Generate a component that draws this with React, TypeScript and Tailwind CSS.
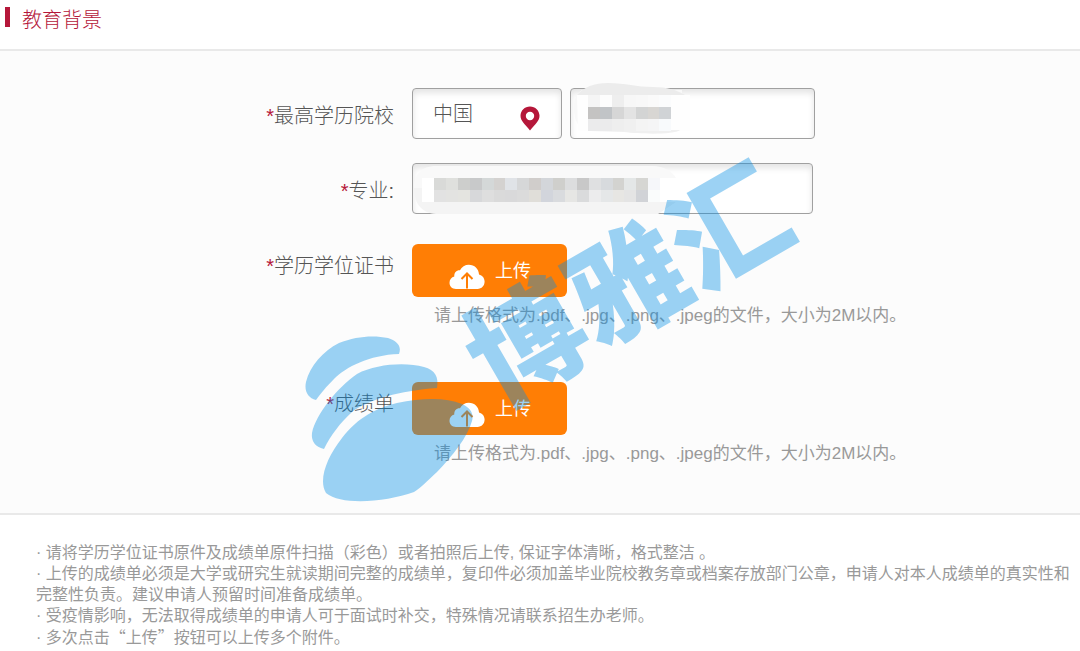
import React from "react";

const SCHOOL_CELLS = [
  ["#f5f5f5", "#fdfdfd", "#eeeeee", "#f7f7f7", "#f8f8f8", "#fafafa", "#fbfcfd"],
  ["#c4c3c2", "#c1c4c7", "#d6d6d6", "#e3e3e3", "#d3d4d4", "#d8d6d3", "#d0d3d6"],
  ["#ebebec", "#ebebec", "#eeeeee", "#f0f0f0", "#f4f4f4", "#f5f5f6", "#f8fafc"],
];

const MAJOR_CELLS = [
  ["#d9dad8", "#dfe0dd", "#cdcecc", "#c8c9ca", "#d4d8d8", "#d4d2d0", "#e0e3e7", "#d6d7d8", "#d0cdcb", "#d3d6da", "#cfcfcc", "#dcddde", "#c8c8c8", "#dfe0e1", "#d7dadd", "#d3d3d0", "#e4e7e7", "#d6d6d3", "#f6f7fa"],
  ["#e2e2e2", "#e3e3e1", "#e4e4e0", "#d7d8da", "#dedede", "#dadada", "#d9d9da", "#dbdbdb", "#e0ded9", "#d2d5dc", "#d9dbde", "#e6e6e4", "#dadbdc", "#ececed", "#e5e7e8", "#e7e6e3", "#e4e4e4", "#d1d3d7", "#fafcfc"],
];

function Cells({ rows, x, y }: { rows: string[][]; x: number; y: number }) {
  return (
    <g shapeRendering="crispEdges">
      {rows.map((row, r) =>
        row.map((fill, c) => (
          <rect key={`${r}-${c}`} x={x + c * 11.9} y={y + r * 12} width="12" height="12" fill={fill} />
        )),
      )}
    </g>
  );
}

function Label({ htmlFor, children }: { htmlFor: string; children: React.ReactNode }) {
  return (
    <label htmlFor={htmlFor} className="text-right text-xl leading-7 text-[#555]">
      <span className="text-[#b5173a]">*</span>
      {children}
    </label>
  );
}

const fieldClass =
  "h-[51px] w-full appearance-none rounded-[4px] border border-[#a0a0a0] bg-white px-5 text-xl font-light text-[#555] shadow-[inset_0_4px_6px_#e4e4e4] outline-none";

function Upload({ id }: { id: string }) {
  return (
    <div>
      <button
        id={id}
        type="button"
        className="flex h-[53px] w-[155px] items-center rounded-md bg-[#ff7e05] pl-[37px] text-lg font-normal text-white"
      >
        <svg className="mt-3 h-[26px] w-[36px]" viewBox="0 0 36 26" aria-hidden="true">
          <path
            d="M7 25C3 25 .5 22.3 .5 18.8c0-3.200 2-5.600 4.800-6.300C5 8.500 7.500 6 11 6.200 12.700 2.700 16 .7 19.800 .7c5.700 0 9.900 4 10.200 9.800 3.400.9 5.600 3.700 5.600 7.100 0 4.200-3 7.400-7 7.400Z"
            fill="#fff"
          />
          <path d="M18 24.500V10M12.500 15 18 9.500l5.500 5.500" fill="none" stroke="#ff7e05" strokeWidth="2" />
        </svg>
        <span className="ml-[10px]">上传</span>
      </button>
      <p className="mt-[7px] pl-[22px] text-[17px] leading-6 font-normal text-[#999]">
        请上传格式为.pdf、.jpg、.png、.jpeg的文件，大小为2M以内。
      </p>
    </div>
  );
}

function Watermark() {
  return (
    <div
      aria-hidden="true"
      className="pointer-events-none absolute left-[304px] top-[157px] h-[350px] w-[500px] text-[#038ee5] opacity-39"
    >
      <svg className="absolute inset-0 size-full" viewBox="304 157 500 350" fill="currentColor">
        <path d="M316 400C308 398 304 391 306 382 310 366 323 351 339 343 356 336 374 335 388 338 397 341 402 346 399 354 369 355 346 367 334 379 326 387 321 393 316 400Z" />
        <path d="M324 449C315 447 311 441 312 433 316 414 337 388 357 374 376 364 405 362 424 367 435 370 439 377 437 388 399 391 370 399 352 412 340 423 331 435 324 449Z" />
        <path d="M326 493C318 480 327 457 342 438 358 417 377 408 397 403 422 398 445 397 462 404 471 408 474 414 472 421 467 438 453 455 437 472 428 480 421 488 414 492 386 502 342 506 326 493Z" />
      </svg>
      <span className="absolute left-[325px] top-[130px] -translate-x-1/2 -translate-y-1/2 -rotate-30 whitespace-nowrap text-[116px] leading-none font-black">
        博雅汇
      </span>
    </div>
  );
}

export default function App() {
  return (
    <main className="relative min-h-screen overflow-hidden bg-white font-['Liberation_Sans','Noto_Sans_CJK_SC',sans-serif] font-light">
      <header className="flex h-[51px] items-start gap-3 border-b-2 border-[#e9e9e9] pl-[5px] pt-[6px]">
        <span className="mt-px h-5 w-[5px] bg-[#b5173a]" />
        <h1 className="text-xl leading-7 text-[#b5173a]">教育背景</h1>
      </header>

      <form
        className="grid grid-cols-[394fr_668fr] gap-x-[18px] border-b-2 border-[#e9e9e9] bg-[#fcfcfc] pt-[37px] pb-[47px]"
        onSubmit={(e) => e.preventDefault()}
      >
        <div className="pt-[14px] text-right">
          <Label htmlFor="school">最高学历院校</Label>
        </div>
        <div className="mb-6 flex max-w-[403px] gap-2">
          <div className="relative w-[150px] shrink-0">
            <select aria-label="国家" className={fieldClass}>
              <option>中国</option>
            </select>
            <svg className="pointer-events-none absolute right-[22px] top-[18px] h-[25px] w-5" viewBox="0 0 20 25" aria-hidden="true">
              <path
                fillRule="evenodd"
                fill="#b5173a"
                d="M10 .5C4.700.5.500 4.600.500 9.800.500 15 5 18.500 10 24.500 15 18.500 19.500 15 19.500 9.800 19.500 4.600 15.300.5 10 .5ZM10 5.800a4.200 4.200 0 1 1 0 8.400 4.200 4.200 0 0 1 0-8.400Z"
              />
            </svg>
          </div>
          <div className="relative grow">
            <input id="school" type="text" className={fieldClass} />
            <svg className="pointer-events-none absolute left-0 top-[-6px] h-[54px] w-[125px]" viewBox="0 0 125 54" aria-hidden="true">
              <path d="M4 30C3 20 5 13 12 8H112V48H14C7 44 5 37 4 30Z" fill="#f8f8f8" />
              <path d="M7 13C14 5 24 1 38 1c18 0 28 4 45 4 14 0 24 3 32 8Z" fill="#ececec" />
              <path d="M7 13H120V49H8Z" fill="#fefefe" />
              <path d="M20 48H104L110 48C104 53 70 52 54 50L20 49Z" fill="#f0f0f0" />
              <Cells rows={SCHOOL_CELLS} x={18} y={13} />
            </svg>
          </div>
        </div>

        <div className="pt-[14px] text-right">
          <Label htmlFor="major">专业:</Label>
        </div>
        <div className="relative mb-[30px] max-w-[401px]">
          <input id="major" type="text" className={fieldClass} />
          <svg className="pointer-events-none absolute left-0 top-0 h-[51px] w-[270px]" viewBox="0 0 270 51" aria-hidden="true">
            <path d="M2 25C2 12 9 3 24 3H240c12 0 20 5 24 12V25Z" fill="#f9f9f9" />
            <path d="M2 25H264V39L246 51H24C9 50 2 40 2 25Z" fill="#f4f4f4" />
            <path d="M10 15H266V39H10Z" fill="#fff" />
            <Cells rows={MAJOR_CELLS} x={22} y={15} />
          </svg>
        </div>

        <div className="pt-2 text-right">
          <Label htmlFor="degree">学历学位证书</Label>
        </div>
        <div className="mb-[54px]">
          <Upload id="degree" />
        </div>

        <div className="pt-2 text-right">
          <Label htmlFor="transcript">成绩单</Label>
        </div>
        <Upload id="transcript" />
      </form>

      <section className="pt-[27px] pl-9 text-base leading-[21px] font-normal text-[#999]">
        <p>· 请将学历学位证书原件及成绩单原件扫描（彩色）或者拍照后上传, 保证字体清晰，格式整洁 。</p>
        <p>· 上传的成绩单必须是大学或研究生就读期间完整的成绩单，复印件必须加盖毕业院校教务章或档案存放部门公章，申请人对本人成绩单的真实性和完整性负责。建议申请人预留时间准备成绩单。</p>
        <p>· 受疫情影响，无法取得成绩单的申请人可于面试时补交，特殊情况请联系招生办老师。</p>
        <p>
          · 多次点击<span className="font-['Noto_Sans_CJK_SC',sans-serif]">“上传”</span>按钮可以上传多个附件。
        </p>
      </section>

      <Watermark />
    </main>
  );
}
